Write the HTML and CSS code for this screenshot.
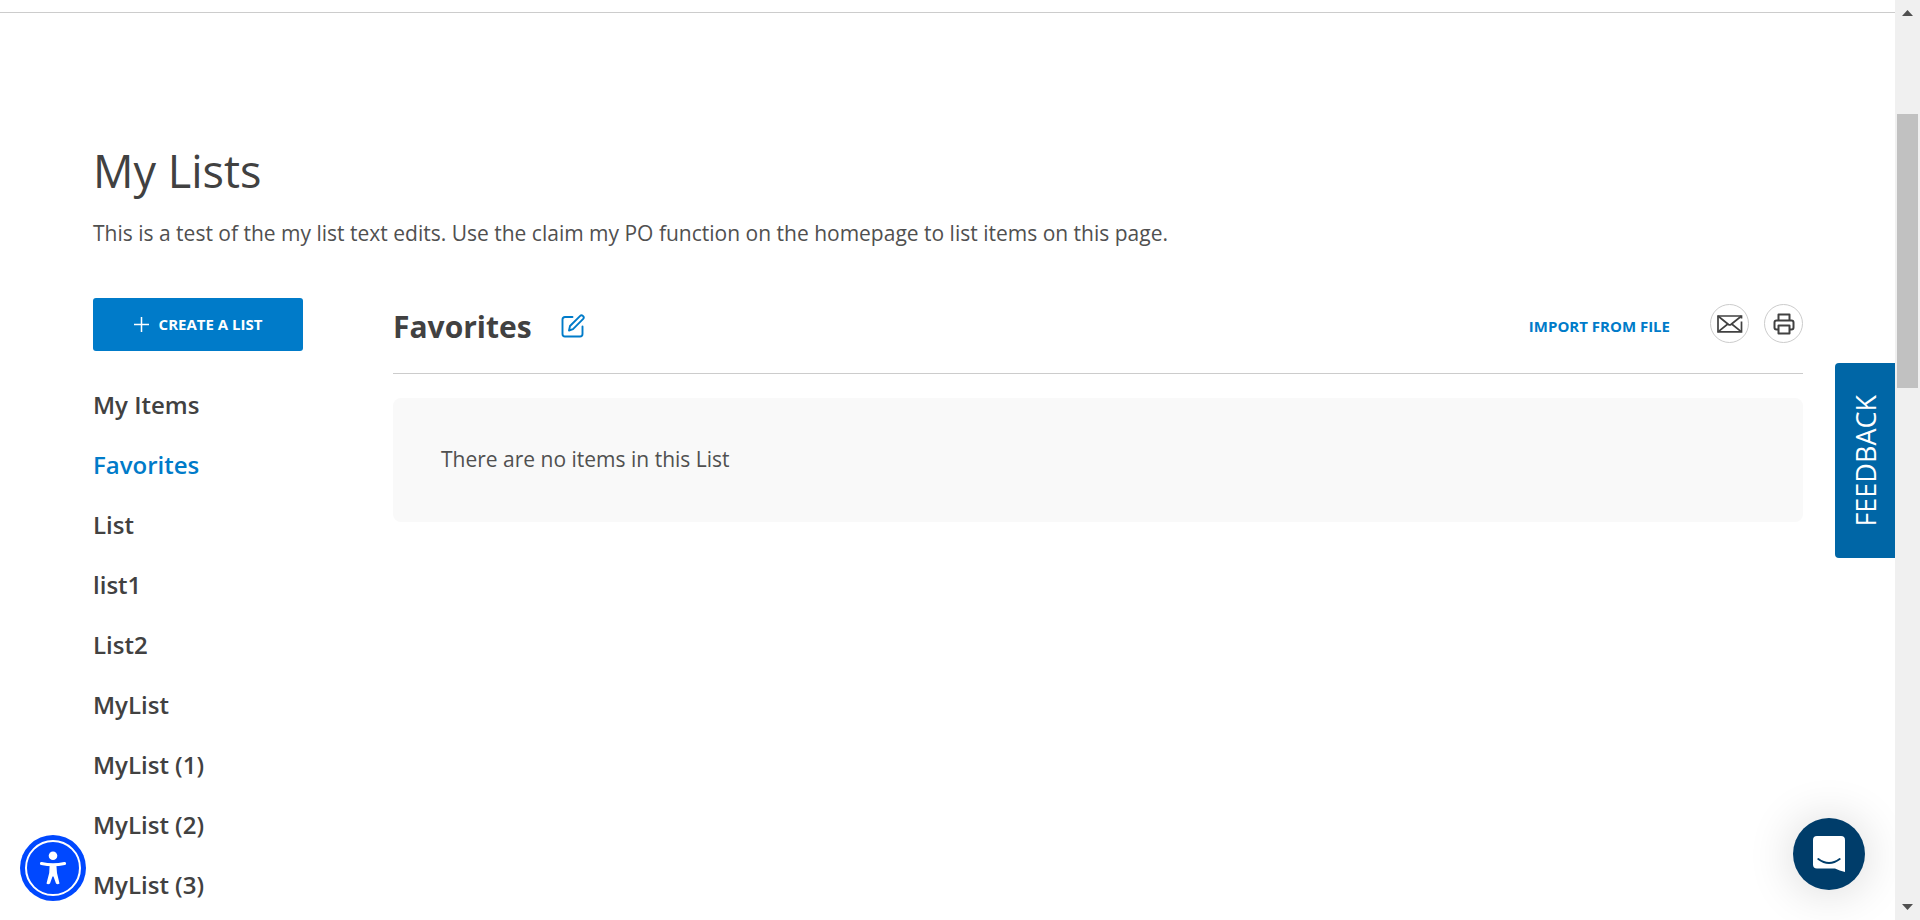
FILE: index.html
```html
<!DOCTYPE html>
<html lang="en">
<head>
<meta charset="utf-8">
<title>My Lists</title>
<link rel="stylesheet" href="styles.css">
</head>
<body class="page">
<div class="viewport">
  <div class="topbar"></div>
  <main class="content">
    <h1 class="title">My Lists</h1>
    <p class="intro">This is a test of the my list text edits. Use the claim my PO function on the homepage to list items on this page.</p>
    <div class="columns">
      <aside class="sidebar">
        <button class="create" type="button">
          <svg width="15" height="15" viewBox="0 0 15 15" aria-hidden="true"><path d="M7.5 0v15M0 7.5h15" stroke="currentColor" stroke-width="1.5"/></svg>
          Create a list
        </button>
        <nav class="lists" aria-label="Lists">
          <a class="list-link" href="#">My Items</a>
          <a class="list-link active" href="#">Favorites</a>
          <a class="list-link" href="#">List</a>
          <a class="list-link" href="#">list1</a>
          <a class="list-link" href="#">List2</a>
          <a class="list-link" href="#">MyList</a>
          <a class="list-link" href="#">MyList (1)</a>
          <a class="list-link" href="#">MyList (2)</a>
          <a class="list-link" href="#">MyList (3)</a>
        </nav>
      </aside>
      <section class="detail">
        <header class="detail-head">
          <h2 class="list-name">Favorites</h2>
          <button class="edit" type="button" aria-label="Rename list">
            <svg width="24" height="24" viewBox="0 0 24 24" fill="none" stroke="currentColor" stroke-width="1.9" stroke-linecap="round" stroke-linejoin="round"><path d="M11.500 3H4Q1.500 3 1.500 5.500V20Q1.500 22.500 4 22.500H19Q21.500 22.500 21.500 20V12.500"/><path d="M8 16.500L9 12L19.200 1.900Q20.400 .7 21.900 1.900Q23.500 3.300 22.200 4.900L12 15.200Z"/></svg>
          </button>
          <a class="import" href="#">Import from file</a>
          <div class="tools">
            <button class="round" type="button" aria-label="Email list">
              <svg width="26" height="18" viewBox="0 0 26 18" fill="none" stroke="currentColor" stroke-width="1.700"><path d="M24.500 3.500V1H1V16.800H24.500V6.500"/><path d="M1 1L11.500 9.500Q12.700 10.400 13.900 9.500L24.500 1M1 16.800L10.800 9M24.500 16.800L14.700 9"/></svg>
            </button>
            <button class="round" type="button" aria-label="Print list">
              <svg width="22" height="22" viewBox="0 0 22 22" fill="none" stroke="currentColor" stroke-width="2" stroke-linejoin="round"><path d="M5.500 7.500V1.500H16.500V7.500"/><path d="M5.500 16.500H3.500Q1.500 16.500 1.500 14.500V9.500Q1.500 7.500 3.500 7.500H18.500Q20.500 7.500 20.500 9.500V14.500Q20.500 16.500 18.500 16.500H16.500"/><path d="M5.500 12.500H16.500V20.500H5.500Z"/></svg>
            </button>
          </div>
        </header>
        <p class="empty">There are no items in this List</p>
      </section>
    </div>
  </main>
  <button class="feedback" type="button"><span class="feedback-label">FEEDBACK</span></button>
  <button class="access" type="button" aria-label="Accessibility menu">
    <svg width="66" height="66" viewBox="0 0 66 66"><circle cx="33" cy="33" r="33" fill="#0048ff"/><circle cx="33" cy="33" r="27" fill="none" stroke="#fff" stroke-width="2"/><circle cx="33" cy="20.700" r="4.300" fill="#fff"/><path d="M21.500 28.500Q33 31 44.500 28.500" fill="none" stroke="#fff" stroke-width="3.200" stroke-linecap="round"/><path d="M29.700 29H36.300L37 38L39.500 48.500Q37.500 50 36 48.500L33.500 41.500H32.500L30 48.500Q28 50 26.500 48.500L29.200 38Z" fill="#fff"/></svg>
  </button>
  <button class="chat" type="button" aria-label="Open chat">
    <svg width="32" height="36" viewBox="0 0 32 36"><path d="M4 0H28Q32 0 32 4V36Q26.500 34.500 22 32.500H4Q0 32.500 0 28.500V4Q0 0 4 0Z" fill="#fff"/><path d="M5.300 23Q16 31 26.700 23" fill="none" stroke="#003d6a" stroke-width="2" stroke-linecap="round"/></svg>
  </button>
</div>
<div class="scrollbar" aria-hidden="true">
  <svg class="arrow" width="11" height="6" viewBox="0 0 11 6"><path d="M5.500 0L11 6H0Z"/></svg>
  <div class="track"><div class="thumb"></div></div>
  <svg class="arrow" width="11" height="6" viewBox="0 0 11 6"><path d="M0 0H11L5.500 6Z"/></svg>
</div>
</body>
</html>
```
FILE: styles.css
```css
* { box-sizing: border-box; }
.page {
  margin: 0;
  height: 100vh;
  display: flex;
  overflow: hidden;
  background: #fff;
  color: #414141;
  font-family: "Open Sans", "Noto Sans", sans-serif;
}
button { font: inherit; color: inherit; border: 0; padding: 0; background: none; cursor: pointer; }
a { text-decoration: none; color: inherit; }
svg { display: block; flex: none; }
.viewport { position: relative; flex: 1; overflow: hidden; }
.topbar { height: 13px; border-bottom: 1px solid #ccc; }
.content { padding: 128px 92px 0 93px; }
.title { margin: 0; font-size: 45px; line-height: 60px; font-weight: 400; }
.intro { margin: 16px 0 0; color: #505050; font-size: 21px; line-height: 32px; font-weight: 400; }
.columns { display: flex; gap: 90px; margin-top: 49px; }
.sidebar { flex: none; width: 210px; }
.create {
  display: flex;
  align-items: center;
  justify-content: center;
  gap: 10px;
  width: 100%;
  height: 53px;
  padding-bottom: 1px;
  border-radius: 3px;
  background: #007bc9;
  color: #fff;
  font-size: 15px;
  font-weight: 700;
  text-transform: uppercase;
}
.lists { display: flex; flex-direction: column; margin-top: 24px; }
.list-link { font-size: 24px; line-height: 60px; font-weight: 600; white-space: nowrap; }
.active { color: #007bc9; }
.detail { flex: 1; min-width: 0; }
.detail-head {
  display: flex;
  align-items: center;
  height: 76px;
  padding-bottom: 18px;
  border-bottom: 1px solid #ccc;
}
.list-name { margin: 0; font-size: 30px; line-height: 40px; font-weight: 700; }
.edit { margin-left: 29px; padding-bottom: 2px; color: #007bc9; }
.import { margin-left: auto; padding-bottom: 2px; color: #007bc9; font-size: 15px; font-weight: 700; text-transform: uppercase; }
.tools { display: flex; gap: 15px; margin-left: 40px; padding-bottom: 6px; }
.round {
  display: flex;
  align-items: center;
  justify-content: center;
  width: 39px;
  height: 39px;
  border: 1px solid #ccc;
  border-radius: 50%;
}
.empty {
  margin: 24px 0 0;
  padding: 45px 48px 47px;
  border-radius: 8px;
  background: #f9f9f9;
  color: #505050;
  font-size: 21px;
  line-height: 32px;
  font-weight: 400;
}
.feedback {
  position: absolute;
  right: 0;
  top: 363px;
  display: flex;
  align-items: center;
  justify-content: center;
  width: 60px;
  height: 195px;
  border-radius: 4px 0 0 4px;
  background: #0066a6;
  color: #fff;
  font-size: 27px;
}
.feedback-label { writing-mode: vertical-rl; transform: rotate(180deg); }
.access { position: absolute; left: 20px; bottom: 19px; }
.chat {
  position: absolute;
  right: 30px;
  bottom: 30px;
  display: flex;
  align-items: center;
  justify-content: center;
  width: 72px;
  height: 72px;
  border-radius: 50%;
  background: #003d6a;
  box-shadow: 0 2px 48px rgba(0, 0, 0, 0.16);
}
.scrollbar {
  flex: none;
  display: flex;
  flex-direction: column;
  align-items: center;
  width: 25px;
  padding: 10px 0;
  background: #f0f0f0;
}
.arrow { fill: #505050; }
.track { flex: 1; width: 21px; padding-top: 98px; }
.thumb { height: 274px; background: #c1c1c1; }
```
